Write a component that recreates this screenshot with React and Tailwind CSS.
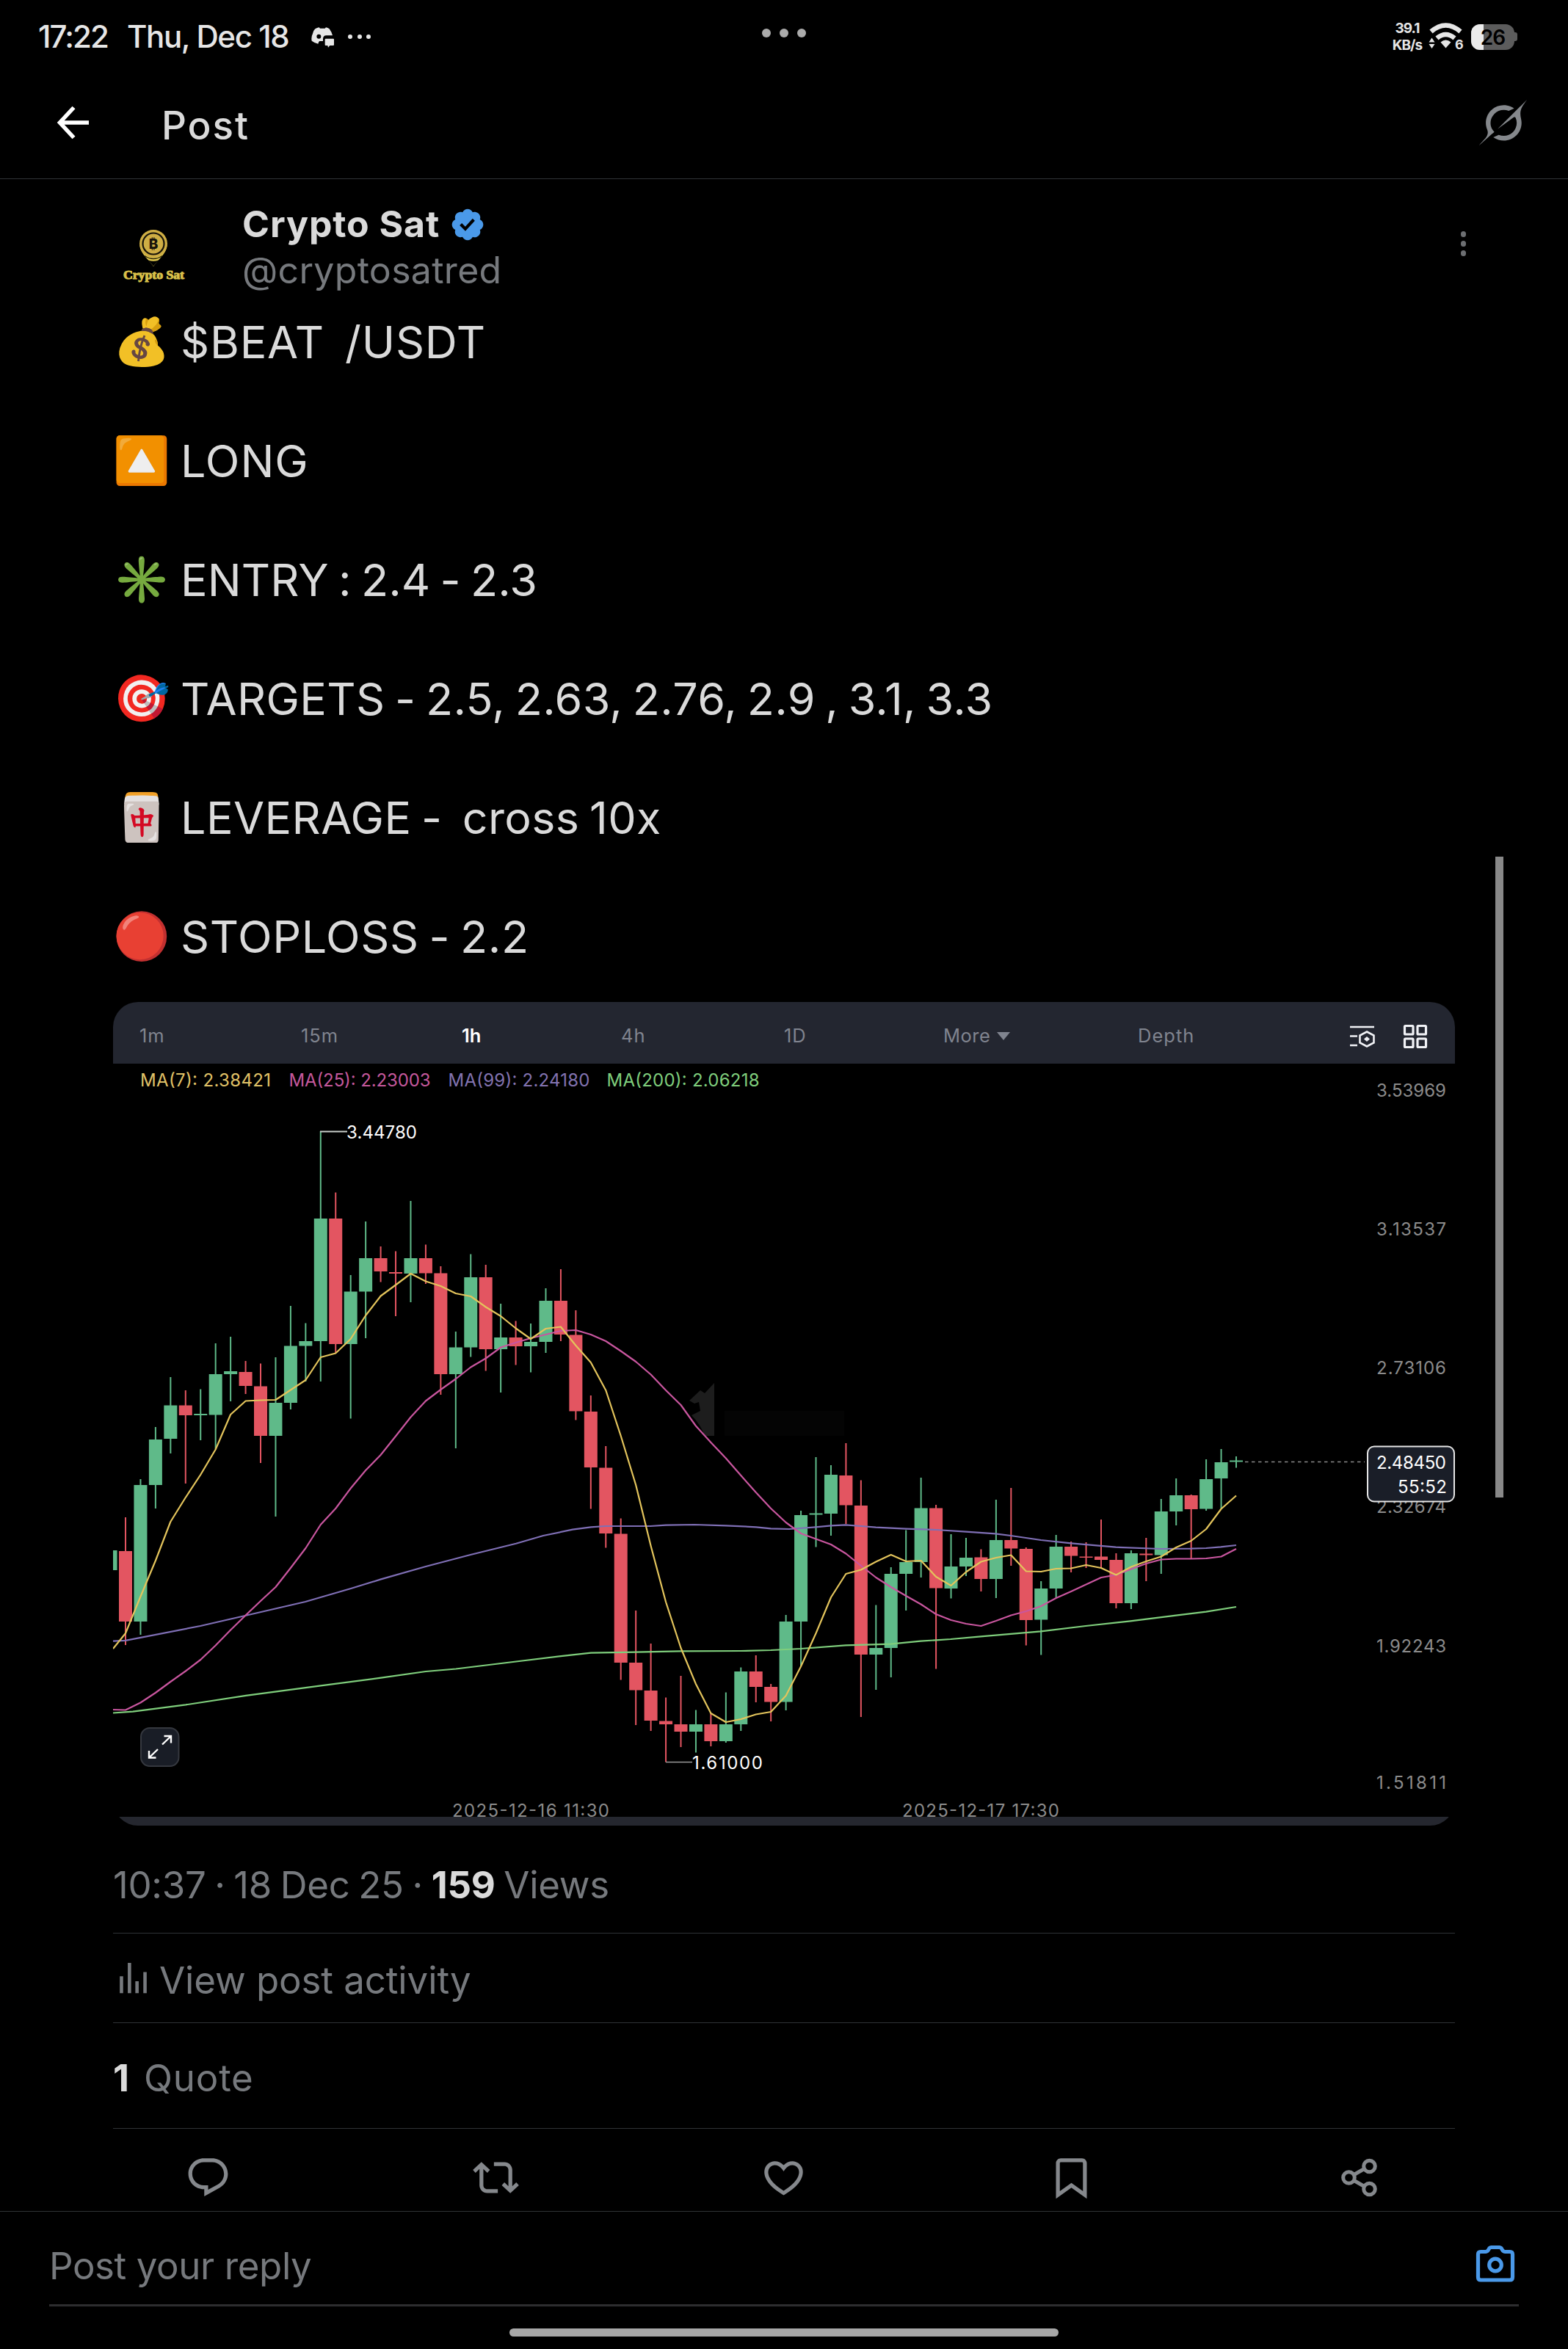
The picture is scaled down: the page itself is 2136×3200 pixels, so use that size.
const GREEN = "#5fba89";
const RED = "#e35561";
const STEP = 20.446;
const FIRST_X = 171;

// [up, high, open/close top, open/close bottom, low]
const candles = [
  [1, 2112, 2112, 2139, 2139],
  [0, 2067, 2113, 2209, 2241],
  [1, 2015, 2023, 2209, 2227],
  [1, 1944, 1961, 2023, 2055],
  [1, 1876, 1914.5, 1960, 1980],
  [0, 1894, 1914.5, 1928, 2021],
  [1, 1892.5, 1926, 1928, 1962],
  [1, 1830, 1872, 1927.5, 1974],
  [1, 1821, 1868, 1872, 1909],
  [0, 1854, 1869, 1888, 1899],
  [0, 1857.5, 1888.5, 1956, 1993],
  [1, 1849, 1911, 1956, 2066],
  [1, 1779, 1833.5, 1911, 1920],
  [1, 1802.5, 1827, 1833.5, 1882],
  [1, 1541, 1660, 1827, 1882],
  [0, 1624.5, 1660, 1831, 1843.5],
  [1, 1737, 1759.5, 1831, 1932.5],
  [1, 1664, 1714, 1759.5, 1823],
  [0, 1698, 1714, 1732, 1746.5],
  [0, 1704.5, 1733, 1735, 1793],
  [1, 1636, 1714, 1735, 1774],
  [0, 1695.5, 1714, 1734.5, 1749],
  [0, 1725, 1734.5, 1872, 1900],
  [1, 1814, 1835.5, 1872, 1973],
  [1, 1708.5, 1740, 1835.5, 1848.5],
  [0, 1723, 1740, 1838, 1867.5],
  [1, 1776, 1822, 1838, 1897],
  [0, 1799.5, 1822, 1834, 1859.5],
  [1, 1803, 1828, 1834, 1869.5],
  [1, 1755, 1772, 1828, 1843],
  [0, 1729, 1772, 1818, 1827],
  [0, 1785, 1818.5, 1922.5, 1934.5],
  [0, 1901, 1923, 1999, 2055.5],
  [0, 1970, 1999.5, 2089, 2108.5],
  [0, 2068.5, 2089.5, 2265, 2288.5],
  [0, 2194, 2265, 2302.5, 2350],
  [0, 2239, 2303, 2344, 2358],
  [0, 2312.5, 2344.5, 2349, 2400.5],
  [0, 2283, 2349, 2359, 2380],
  [1, 2329.5, 2349, 2359, 2387.5],
  [0, 2334, 2349, 2372, 2379],
  [1, 2305.5, 2349, 2372, 2374],
  [1, 2271.5, 2277, 2349, 2358],
  [0, 2255, 2277, 2298, 2319],
  [0, 2294, 2298, 2318.5, 2345],
  [1, 2200, 2209, 2318.5, 2330],
  [1, 2058, 2064, 2209, 2270],
  [1, 1985, 2061.5, 2063.5, 2107.5],
  [1, 1996, 2009, 2062, 2092],
  [0, 1966, 2010, 2050.5, 2076],
  [0, 2016.5, 2051, 2254, 2339],
  [1, 2186.5, 2245, 2254, 2302],
  [1, 2135, 2144, 2245, 2285],
  [1, 2084.5, 2128, 2144, 2194],
  [1, 2013, 2054.5, 2128, 2149],
  [0, 2050, 2054.5, 2163.5, 2273.5],
  [1, 2090, 2134, 2164, 2177.5],
  [1, 2095, 2122, 2134, 2147],
  [0, 2110.5, 2121.5, 2151, 2168],
  [1, 2043, 2098, 2151, 2177],
  [0, 2027, 2098, 2109.5, 2133],
  [0, 2108, 2110, 2207, 2241.5],
  [1, 2154, 2164, 2206.5, 2254.5],
  [1, 2091, 2107, 2164, 2176.5],
  [0, 2100, 2107, 2119.5, 2142],
  [0, 2101, 2120.5, 2122, 2136],
  [0, 2070, 2120.5, 2125, 2136.5],
  [0, 2116, 2125, 2184, 2191],
  [1, 2112, 2116, 2184, 2192],
  [0, 2095, 2116.5, 2118.5, 2154],
  [1, 2042, 2059, 2118.5, 2144],
  [1, 2014, 2037, 2059, 2078],
  [0, 2036, 2037, 2056, 2124],
  [1, 1988, 2015, 2055.5, 2058],
  [1, 1974, 1992, 2014, 2055],
  [1, 1984, 1989.5, 1991.5, 1999.5],
];

// one value per candle, starting with the first full one
const ma7 = [
  2225, 2175, 2126, 2073, 2040, 2009, 1974.5, 1927, 1908.5, 1907.5, 1907, 1893.5, 1880, 1849, 1843.5,
  1824, 1792, 1765.5, 1750.5, 1735, 1745.5, 1752, 1762, 1766, 1780.5, 1793, 1809.5, 1824, 1810, 1807.5,
  1833, 1856, 1894, 1956, 2023, 2106, 2182.5, 2245, 2294, 2334, 2346, 2342, 2335.5, 2332, 2310,
  2270, 2225, 2176, 2144, 2138.5, 2127.5, 2118, 2127, 2126, 2148, 2160, 2141.5, 2127.5, 2122, 2118.5,
  2140.5, 2141, 2137, 2136.5, 2132, 2136, 2145.5, 2134.5, 2127, 2120.5, 2108, 2099, 2083, 2055.5, 2037.5,
];

const ma25 = [
  2329.5, 2319.5, 2306, 2291, 2276.5, 2261, 2241.5, 2220.5, 2200.5, 2181, 2162, 2136, 2109, 2077, 2055,
  2027.5, 2003, 1982, 1956.5, 1930.5, 1908.5, 1893, 1878.5, 1862.5, 1850.5, 1835.5, 1829, 1823, 1818, 1813,
  1812, 1818, 1827, 1840.5, 1855, 1872.5, 1894, 1914, 1942.5, 1965, 1986.5, 2010, 2033, 2055, 2074,
  2089, 2096.5, 2104, 2116.5, 2133, 2149, 2162, 2174, 2185.5, 2199, 2207, 2212, 2215, 2208, 2200.5,
  2195, 2188, 2177, 2168, 2158.5, 2149, 2145.5, 2137.5, 2130, 2124.5, 2123.5, 2123.5, 2123, 2120.5, 2110,
];

const ma99 =
  "154,2235.6 171,2234.8 273,2215 335,2200.8 416,2182 478,2164 519,2151.4 580,2134 641,2118 703,2102.8 740,2092 780,2083.7 805,2080.3 825,2079 886,2079 907,2077.7 946,2077 989,2078.3 1030,2080.3 1050,2082.3 1075,2083 1111,2080.3 1132,2078.3 1152,2077.3 1173,2079 1193,2080.7 1234,2082.7 1275,2084 1316,2086.7 1356,2089.3 1377,2092 1418,2098 1459,2102.3 1520,2107.7 1581,2110 1622,2109.7 1643,2109 1663,2107.3 1684,2105";

const ma200 =
  "154,2333.5 181,2331.6 253,2322.4 335,2309.8 437,2296.4 519,2285.7 580,2277 621,2273.5 703,2263.5 780,2254.3 805,2251.7 866,2250.7 927,2249.3 1009,2249 1050,2248 1091,2246 1152,2241.3 1213,2239.7 1254,2235.7 1275,2234.3 1295,2233 1336,2229.3 1418,2222.3 1479,2215 1540,2208.3 1602,2200.7 1643,2195.7 1684,2189";

const toPoints = (values) =>
  values.map((y, i) => `${(FIRST_X + i * STEP).toFixed(1)},${y}`).join(" ");

const averages = [
  { label: "MA(7): 2.38421", x: 191, width: 178, color: "#e0c267" },
  { label: "MA(25): 2.23003", x: 393.5, width: 193, color: "#c5589c" },
  { label: "MA(99): 2.24180", x: 610.5, width: 193, color: "#8273b0" },
  { label: "MA(200): 2.06218", x: 826.5, width: 208, color: "#7fce7c" },
];

const priceLabels = [
  { label: "3.53969", y: 1485 },
  { label: "3.13537", y: 1673.5 },
  { label: "2.73106", y: 1862.5 },
  { label: "2.32674", y: 2052 },
  { label: "1.92243", y: 2241.5 },
  { label: "1.51811", y: 2428 },
];

const lines = [
  { emoji: "💰", text: "$BEAT  /USDT", tracking: "tracking-[0.8px]" },
  { emoji: "🔼", text: "LONG", tracking: "tracking-[1px]" },
  { emoji: "✳️", text: "ENTRY : 2.4 - 2.3", tracking: "tracking-[0.1px]" },
  { emoji: "🎯", text: "TARGETS - 2.5, 2.63, 2.76, 2.9 , 3.1, 3.3", tracking: "tracking-[0.33px]" },
  { emoji: "🀄", text: "LEVERAGE -  cross 10x", tracking: "tracking-[0.4px]" },
  { emoji: "🔴", text: "STOPLOSS - 2.2", tracking: "tracking-[0.6px]" },
];

function Candle({ data, index }) {
  const [up, high, top, bottom, low] = data;
  const x = FIRST_X + (index - 1) * STEP;
  const color = up ? GREEN : RED;
  return (
    <g fill={color}>
      <rect x={x - 1} y={high} width="2" height={low - high} />
      <rect x={x - 9} y={top} width="18" height={bottom - top} />
    </g>
  );
}

function StatusBar() {
  return (
    <div className="flex h-[100px] items-center justify-between pl-[52px] pr-[69px] text-[#e6e6e6]">
      <div className="flex w-[900px] items-center text-[42px] font-medium leading-none">
        <span className="w-[121px] tracking-[-1.9px]">17:22</span>
        <span className="w-[251px] whitespace-nowrap tracking-[-1.4px]">Thu, Dec 18</span>
        <svg className="mt-[2px] h-[28px] w-[31px]" viewBox="0 0 93 84" fill="currentColor">
          <path
            fillRule="evenodd"
            d="M6 26Q10 12 16 7Q24 2 32 1l4 4h20l4-4q8 1 14 6q10 14 13 27H62q-14 0-14 14v9H34l-3 3-3 8q-16-4-26-12Q-1 40 6 26zM31 29a9 9 0 1 0 0 18a9 9 0 1 0 0-18z"
          />
          <path d="M59 47h31q3 0 3 3v22q0 3-3 3H76l-7 8-2-8h-8q-3 0-3-3V50q0-3 3-3z" />
        </svg>
        <div className="ml-[19px] flex gap-[6.500px]">
          <i className="h-[6px] w-[6px] rounded-full bg-[#e6e6e6]" />
          <i className="h-[6px] w-[6px] rounded-full bg-[#e6e6e6]" />
          <i className="h-[6px] w-[6px] rounded-full bg-[#e6e6e6]" />
        </div>
      </div>
      <div className="mb-[10px] flex gap-[12px]">
        <i className="h-[12px] w-[12px] rounded-full bg-[#ababab]" />
        <i className="h-[12px] w-[12px] rounded-full bg-[#ababab]" />
        <i className="h-[12px] w-[12px] rounded-full bg-[#ababab]" />
      </div>
      <div className="flex w-[883px] items-center justify-end">
        <div className="flex w-[42px] flex-col items-center whitespace-nowrap text-[19px] font-bold leading-[23px] tracking-[-1px]">
          <span>39.1</span>
          <span>KB/s</span>
        </div>
        <svg className="ml-[7px] h-[40px] w-[50px] overflow-visible" viewBox="0 0 50 40" fill="none">
          <path d="M4.500 13Q24.500-4 44.500 13" stroke="#e6e6e6" strokeWidth="6.500" />
          <path d="M12.500 22Q24.500 12 36.500 22" stroke="#e6e6e6" strokeWidth="6.500" />
          <path d="M24.500 35.500l-7-8q7-6 14 0z" fill="#e6e6e6" />
          <path d="M5.500 21.500l4 6h-8zM5.500 36l4-6h-8z" fill="#e6e6e6" />
          <text x="37" y="36.500" fill="#e6e6e6" fontSize="18" fontWeight="700">6</text>
        </svg>
        <div className="ml-[9px] flex items-center">
          <div className="relative h-[35px] w-[59px] overflow-hidden rounded-[12px] bg-[#5c5c5c]">
            <div className="h-full w-[17px] bg-[#ececec]" />
            <span className="absolute inset-0 text-center text-[28px] font-semibold leading-[36px] tracking-[-1px] text-black">26</span>
          </div>
          <i className="h-[12px] w-[4px] rounded-r-[3px] bg-[#5c5c5c]" />
        </div>
      </div>
    </div>
  );
}

function AppBar() {
  return (
    <header className="flex h-[144px] items-start border-b border-[#2f3336] pl-[77px] pr-[56px] pt-[31px]">
      <svg className="mt-[12px] h-[48px] w-[45px]" viewBox="0 0 45 48" fill="none" stroke="#fff" strokeWidth="5.500">
        <path d="M23.500 3.500L4.500 24l19 20.500M4 24h40" />
      </svg>
      <h1 className="ml-[98px] mt-[8px] flex-1 text-[53px] font-medium leading-[64px] tracking-[1.9px] text-[#dadada]">Post</h1>
      <svg className="mt-[5px] h-[62px] w-[65px]" viewBox="0 0 33 32" preserveAspectRatio="none" fill="#85888c">
        <path d="M12.745 20.54l10.97-8.19c.539-.4 1.307-.244 1.564.38 1.349 3.288.746 7.241-1.938 9.955-2.683 2.714-6.417 3.31-9.83 1.954l-3.728 1.745c5.347 3.697 11.84 2.782 15.898-1.324 3.219-3.255 4.216-7.692 3.284-11.693l.008.009c-1.351-5.878.332-8.227 3.782-13.031L33 0l-4.54 4.59v-.014L12.743 20.544m-2.263 1.987c-3.837-3.707-3.175-9.446.1-12.755 2.42-2.449 6.388-3.448 9.852-1.979l3.72-1.737c-.67-.49-1.53-1.017-2.515-1.387-4.455-1.854-9.789-.931-13.41 2.728-3.483 3.523-4.579 8.94-2.697 13.561 1.405 3.454-.899 5.898-3.22 8.364C1.49 30.2.666 31.074 0 32l10.478-9.466" />
      </svg>
    </header>
  );
}

function Avatar() {
  return (
    <svg className="h-[108px] w-[108px]" viewBox="0 0 108 108">
      <circle cx="54" cy="54" r="54" fill="#000" />
      <path d="M36.500 40c1 12 10 17 18.500 29 8.500-12 17.500-17 18.500-29z" fill="#e3cb50" />
      <path d="M48 60.500q7 2.500 14 0l-7 8z" fill="#000" />
      <path d="M43 54.500q12 8 24 0" fill="none" stroke="#2a2408" strokeWidth="1.500" />
      <circle cx="55" cy="38" r="19" fill="#cfae44" />
      <circle cx="55" cy="38" r="14.500" fill="none" stroke="#17140a" strokeWidth="2.200" />
      <text x="55" y="45" textAnchor="middle" fill="#17140a" fontSize="19" fontWeight="800">₿</text>
      <text
        x="14"
        y="86"
        fill="#d9c04a"
        stroke="#d9c04a"
        strokeWidth="1"
        fontFamily="Liberation Serif, serif"
        fontSize="16"
        fontWeight="700"
        textLength="83"
        lengthAdjust="spacingAndGlyphs"
      >
        Crypto Sat
      </text>
    </svg>
  );
}

function Author() {
  return (
    <div className="flex h-[141px] items-start">
      <div className="mt-[50px] w-[176px]">
        <Avatar />
      </div>
      <div className="flex-1">
        <div className="mt-[30px] flex items-center">
          <span className="text-[50px] font-bold leading-[63px] tracking-[0.9px] text-[#dadada]">Crypto Sat</span>
          <svg className="ml-[13px] h-[50px] w-[50px]" viewBox="0 0 22 22" fill="#4a99e9">
            <path d="M20.396 11c-.018-.646-.215-1.275-.57-1.816-.354-.54-.852-.972-1.438-1.246.223-.607.27-1.264.14-1.897-.131-.634-.437-1.218-.882-1.687-.47-.445-1.053-.75-1.687-.882-.633-.13-1.29-.083-1.897.14-.273-.587-.704-1.086-1.245-1.44S11.647 1.62 11 1.604c-.646.017-1.273.213-1.813.568s-.969.854-1.24 1.44c-.608-.223-1.267-.272-1.902-.14-.635.13-1.22.436-1.69.882-.445.47-.749 1.055-.878 1.688-.13.633-.08 1.29.144 1.896-.587.274-1.087.705-1.443 1.245-.356.54-.555 1.17-.574 1.817.02.647.218 1.276.574 1.817.356.54.856.972 1.443 1.245-.224.606-.274 1.263-.144 1.896.13.634.433 1.218.877 1.688.47.443 1.054.747 1.687.878.633.132 1.29.084 1.897-.136.274.586.705 1.084 1.246 1.439.54.354 1.17.551 1.816.569.647-.016 1.276-.213 1.817-.567s.972-.854 1.245-1.44c.604.239 1.266.296 1.903.164.636-.132 1.22-.447 1.68-.907.46-.46.776-1.044.908-1.681s.075-1.299-.165-1.903c.586-.274 1.084-.705 1.439-1.246.354-.54.551-1.17.569-1.816zM9.662 14.85l-3.429-3.428 1.293-1.302 2.072 2.072 4.4-4.794 1.347 1.246z" />
          </svg>
        </div>
        <div className="text-[50px] leading-[63px] tracking-[0.3px] text-[#76797d]">@cryptosatred</div>
      </div>
      <div className="ml-auto mr-[-15px] mt-[71px] flex flex-col gap-[5.500px]">
        <i className="h-[7.500px] w-[7.500px] rounded-full bg-[#6d6f72]" />
        <i className="h-[7.500px] w-[7.500px] rounded-full bg-[#6d6f72]" />
        <i className="h-[7.500px] w-[7.500px] rounded-full bg-[#6d6f72]" />
      </div>
    </div>
  );
}

function ChartTabs() {
  return (
    <div className="flex h-[84px] items-center bg-[#232630] pl-[36px] pt-[9px] text-[25.500px] tracking-[1px] text-[#80848f]">
      <span className="w-[220px]">1m</span>
      <span className="w-[219px]">15m</span>
      <span className="w-[217px] font-semibold tracking-normal text-white">1h</span>
      <span className="w-[222px]">4h</span>
      <span className="w-[217px]">1D</span>
      <span className="flex w-[265px] items-center gap-[9px] tracking-[0.5px]">
        More
        <svg className="h-[11px] w-[18px]" viewBox="0 0 18 11" fill="#80848f">
          <path d="M0 0h18l-9 11z" />
        </svg>
      </span>
      <span className="w-[288px]">Depth</span>
      <svg className="h-[32px] w-[36px]" viewBox="0 0 36 32" fill="none" stroke="#f1f2f6" strokeWidth="2.600">
        <path d="M1 3h33M1 15.500h10M1 28h10M24 9.500l9.500 5v10l-9.500 5-9.500-5v-10z" />
        <path d="M24 16l4 3.500-4 3.500-4-3.500z" fill="#f1f2f6" stroke="none" />
      </svg>
      <svg className="ml-[37px] h-[34px] w-[34px]" viewBox="0 0 34 34" fill="none" stroke="#f1f2f6" strokeWidth="3.200">
        <rect x="2.500" y="2.500" width="11.500" height="11.500" rx="1" />
        <rect x="20" y="2.500" width="11.500" height="11.500" rx="1" />
        <rect x="2.500" y="20" width="11.500" height="11.500" rx="1" />
        <rect x="20" y="20" width="11.500" height="11.500" rx="1" />
      </svg>
    </div>
  );
}

function Chart() {
  return (
    <svg className="block h-[1026px] w-[1828px] overflow-visible" viewBox="154 1449 1828 1026" fontSize="24">
      {averages.map((a) => (
        <text key={a.label} x={a.x} y="1480" fill={a.color} textLength={a.width}>
          {a.label}
        </text>
      ))}

      {/* exchange watermark */}
      <path d="M939 1908l15-14 6 4 13-14v72h-13q-6-16-18-28l12-6-2-12-6 2z" fill="#1d1d1d" />
      <rect x="987" y="1922" width="163" height="34" fill="#040404" />

      {candles.map((c, i) => (
        <Candle key={i} data={c} index={i} />
      ))}

      <g fill="none" strokeWidth="2.200" strokeLinejoin="round">
        <polyline points={ma99} stroke="#7f6fb5" />
        <polyline points={ma200} stroke="#7fce7c" />
        <polyline points={`154,2329 ${toPoints(ma25)}`} stroke="#c9569f" />
        <polyline points={`154,2246 ${toPoints(ma7)}`} stroke="#e3c45c" />
      </g>

      {/* period high and low */}
      <path d="M436 1541.500h37" stroke="#c9cfcc" strokeWidth="2" />
      <text x="472" y="1551" fill="#fff" textLength="96">3.44780</text>
      <path d="M907 2400.500h36" stroke="#9a9a9a" strokeWidth="1.500" />
      <text x="943" y="2409.500" fill="#fff" textLength="96">1.61000</text>

      <path d="M1696 1991.500h163" stroke="#8a8a8a" strokeWidth="1.500" strokeDasharray="4.500 4.500" />
      <g fill="#8b8b8b">
        {priceLabels.map((p) => (
          <text key={p.label} x="1875" y={p.y + 9} textLength="95">
            {p.label}
          </text>
        ))}
      </g>
      <rect x="1863" y="1970.500" width="118" height="75" rx="9" fill="#1a1e28" stroke="#e6e6e6" strokeWidth="2" />
      <text x="1875" y="2001" fill="#fff" textLength="95">2.48450</text>
      <text x="1904" y="2034" fill="#fff" textLength="67">55:52</text>

      <rect x="192" y="2354" width="51.500" height="52" rx="12" fill="#191d26" stroke="#35383f" strokeWidth="2" />
      <path d="M221 2376.500l12-11.500m-9.500 0h9.500v9.500M215 2383l-12 11.500m0-9.500v9.500h9.500" fill="none" stroke="#fff" strokeWidth="2.400" />

      <g fill="#8b8b8b">
        <text x="616" y="2474.500" textLength="214">2025-12-16 11:30</text>
        <text x="1229" y="2474.500" textLength="214">2025-12-17 17:30</text>
      </g>
    </svg>
  );
}

function Actions() {
  return (
    <div className="flex h-[112px] items-center justify-between pl-[98px] pr-[99px] pt-[21px] text-[#85888c]">
      <svg className="h-[63px] w-[63px]" viewBox="0 0 24 24" fill="currentColor">
        <path d="M1.751 10c0-4.42 3.584-8 8.005-8h4.366c4.49 0 8.129 3.64 8.129 8.13 0 2.96-1.607 5.68-4.196 7.11l-8.054 4.46v-3.69h-.067c-4.49.1-8.183-3.51-8.183-8.01zm8.005-6c-3.317 0-6.005 2.69-6.005 6 0 3.37 2.77 6.08 6.138 6.01l.351-.01h1.761v2.3l5.087-2.81c1.951-1.08 3.163-3.13 3.163-5.36 0-3.39-2.744-6.13-6.129-6.13H9.756z" />
      </svg>
      <svg className="h-[63px] w-[63px]" viewBox="0 0 24 24" fill="currentColor">
        <path d="M4.5 3.88l4.432 4.14-1.364 1.46L5.5 7.55V16c0 1.1.896 2 2 2H13v2H7.5c-2.209 0-4-1.79-4-4V7.55L1.432 9.48.068 8.02 4.5 3.88zM16.5 6H11V4h5.5c2.209 0 4 1.79 4 4v8.45l2.068-1.93 1.364 1.46-4.432 4.14-4.432-4.14 1.364-1.46 2.068 1.93V8c0-1.1-.896-2-2-2z" />
      </svg>
      <svg className="h-[63px] w-[63px]" viewBox="0 0 24 24" fill="currentColor">
        <path d="M16.697 5.5c-1.222-.06-2.679.51-3.89 2.16l-.805 1.09-.806-1.09C9.984 6.01 8.526 5.44 7.304 5.5c-1.243.07-2.349.78-2.91 1.91-.552 1.12-.633 2.78.479 4.82 1.074 1.97 3.257 4.27 7.129 6.61 3.87-2.34 6.052-4.64 7.126-6.61 1.111-2.04 1.03-3.7.477-4.82-.561-1.13-1.666-1.84-2.908-1.91zm4.187 7.69c-1.351 2.48-4.001 5.12-8.379 7.67l-.503.3-.504-.3c-4.379-2.55-7.029-5.19-8.382-7.67-1.36-2.5-1.41-4.86-.514-6.67.887-1.79 2.647-2.91 4.601-3.01 1.651-.09 3.368.56 4.798 2.01 1.429-1.45 3.146-2.1 4.796-2.01 1.954.1 3.714 1.22 4.601 3.01.896 1.81.846 4.17-.514 6.67z" />
      </svg>
      <svg className="h-[63px] w-[63px]" viewBox="0 0 24 24" fill="currentColor">
        <path d="M4 4.500C4 3.120 5.119 2 6.500 2h11C18.881 2 20 3.120 20 4.500v18.440l-8-5.710-8 5.710V4.500zM6.500 4c-.276 0-.5.22-.5.5v14.560l6-4.290 6 4.290V4.500c0-.28-.224-.5-.5-.5h-11z" />
      </svg>
      <svg className="h-[63px] w-[63px]" viewBox="0 0 63 63" fill="none" stroke="currentColor" strokeWidth="5">
        <circle cx="17.500" cy="31.500" r="7.800" />
        <circle cx="45.500" cy="16" r="7.800" />
        <circle cx="45.500" cy="47" r="7.800" />
        <path d="M24.500 27.500l14-8M24.500 35.500l14 8" />
      </svg>
    </div>
  );
}

function ReplyBar() {
  return (
    <footer className="h-[188px] border-t border-[#2f3336] px-[67px]">
      <div className="flex h-[129px] items-start justify-between border-b-[3px] border-[#2d2d2f] pt-[42px]">
        <span className="text-[51px] leading-[64px] tracking-[-0.4px] text-[#76797d]">Post your reply</span>
        <svg className="mr-[4px] mt-[2px] h-[54px] w-[56px]" viewBox="0 0 56 54" fill="none" stroke="#4a99e9" strokeWidth="5.200">
          <path d="M8 10.500h6.500q2.500 0 4-2.500l1.500-2.500q1-1 2.500-1h11q1.500 0 2.500 1l1.500 2.500q1.500 2.500 4 2.500H48q3.500 0 3.500 3.500v31q0 4-3.500 4H8q-3.500 0-3.500-4V14q0-3.500 3.500-3.500z" />
          <circle cx="28" cy="28.500" r="8.300" />
        </svg>
      </div>
      <div className="mx-auto mt-[30px] h-[11px] w-[748px] rounded-full bg-[#a7a7a7]" />
    </footer>
  );
}

export default function App() {
  return (
    <div className="relative flex h-[3200px] w-full flex-col overflow-hidden bg-black font-['Inter','Liberation_Sans',sans-serif]">
      <StatusBar />
      <AppBar />
      <main className="flex flex-1 flex-col px-[154px]">
        <Author />
        <div className="h-[980px] text-[61px] leading-[162px] text-[#dadada]">
          {lines.map((line) => (
            <div key={line.text} className="flex h-[162px] items-center">
              <span className="w-[92px] font-['Noto_Color_Emoji'] text-[62.500px] brightness-95">{line.emoji}</span>
              <span className={`whitespace-pre [word-spacing:-4px] ${line.tracking}`}>{line.text}</span>
            </div>
          ))}
        </div>
        <section className="h-[1122px] overflow-hidden rounded-[34px] bg-black">
          <ChartTabs />
          <Chart />
          <div className="h-[12px] bg-[#25272f]" />
        </section>
        <div className="h-[147px] border-b border-[#2f3336] pt-[49px] text-[51px] leading-[64px] tracking-[-0.3px] text-[#76797d] [word-spacing:-2.3px]">
          10:37 · 18 Dec 25 · <b className="text-[#dadada]">159</b> Views
        </div>
        <div className="flex h-[122px] items-center border-b border-[#2f3336] text-[51px] text-[#76797d]">
          <svg className="h-[55px] w-[55px]" viewBox="0 0 24 24" fill="currentColor">
            <path d="M8.750 21V3h2v18h-2zM18 21V8.500h2V21h-2zM4 21l.004-10h2L6 21H4zm9.248 0v-7h2v7h-2z" />
          </svg>
          <span className="ml-[8px] mt-[7px] tracking-[-0.1px]">View post activity</span>
        </div>
        <div className="flex h-[144px] items-center gap-[20px] border-b border-[#2f3336] pt-[8px] text-[51px] text-[#76797d]">
          <b className="text-[#dadada]">1</b>
          <span className="tracking-[0.8px]">Quote</span>
        </div>
        <Actions />
      </main>
      <ReplyBar />
      {/* page scrollbar */}
      <div className="absolute left-[2037px] top-[1167px] h-[873px] w-[11px] bg-[#888888]" />
    </div>
  );
}
